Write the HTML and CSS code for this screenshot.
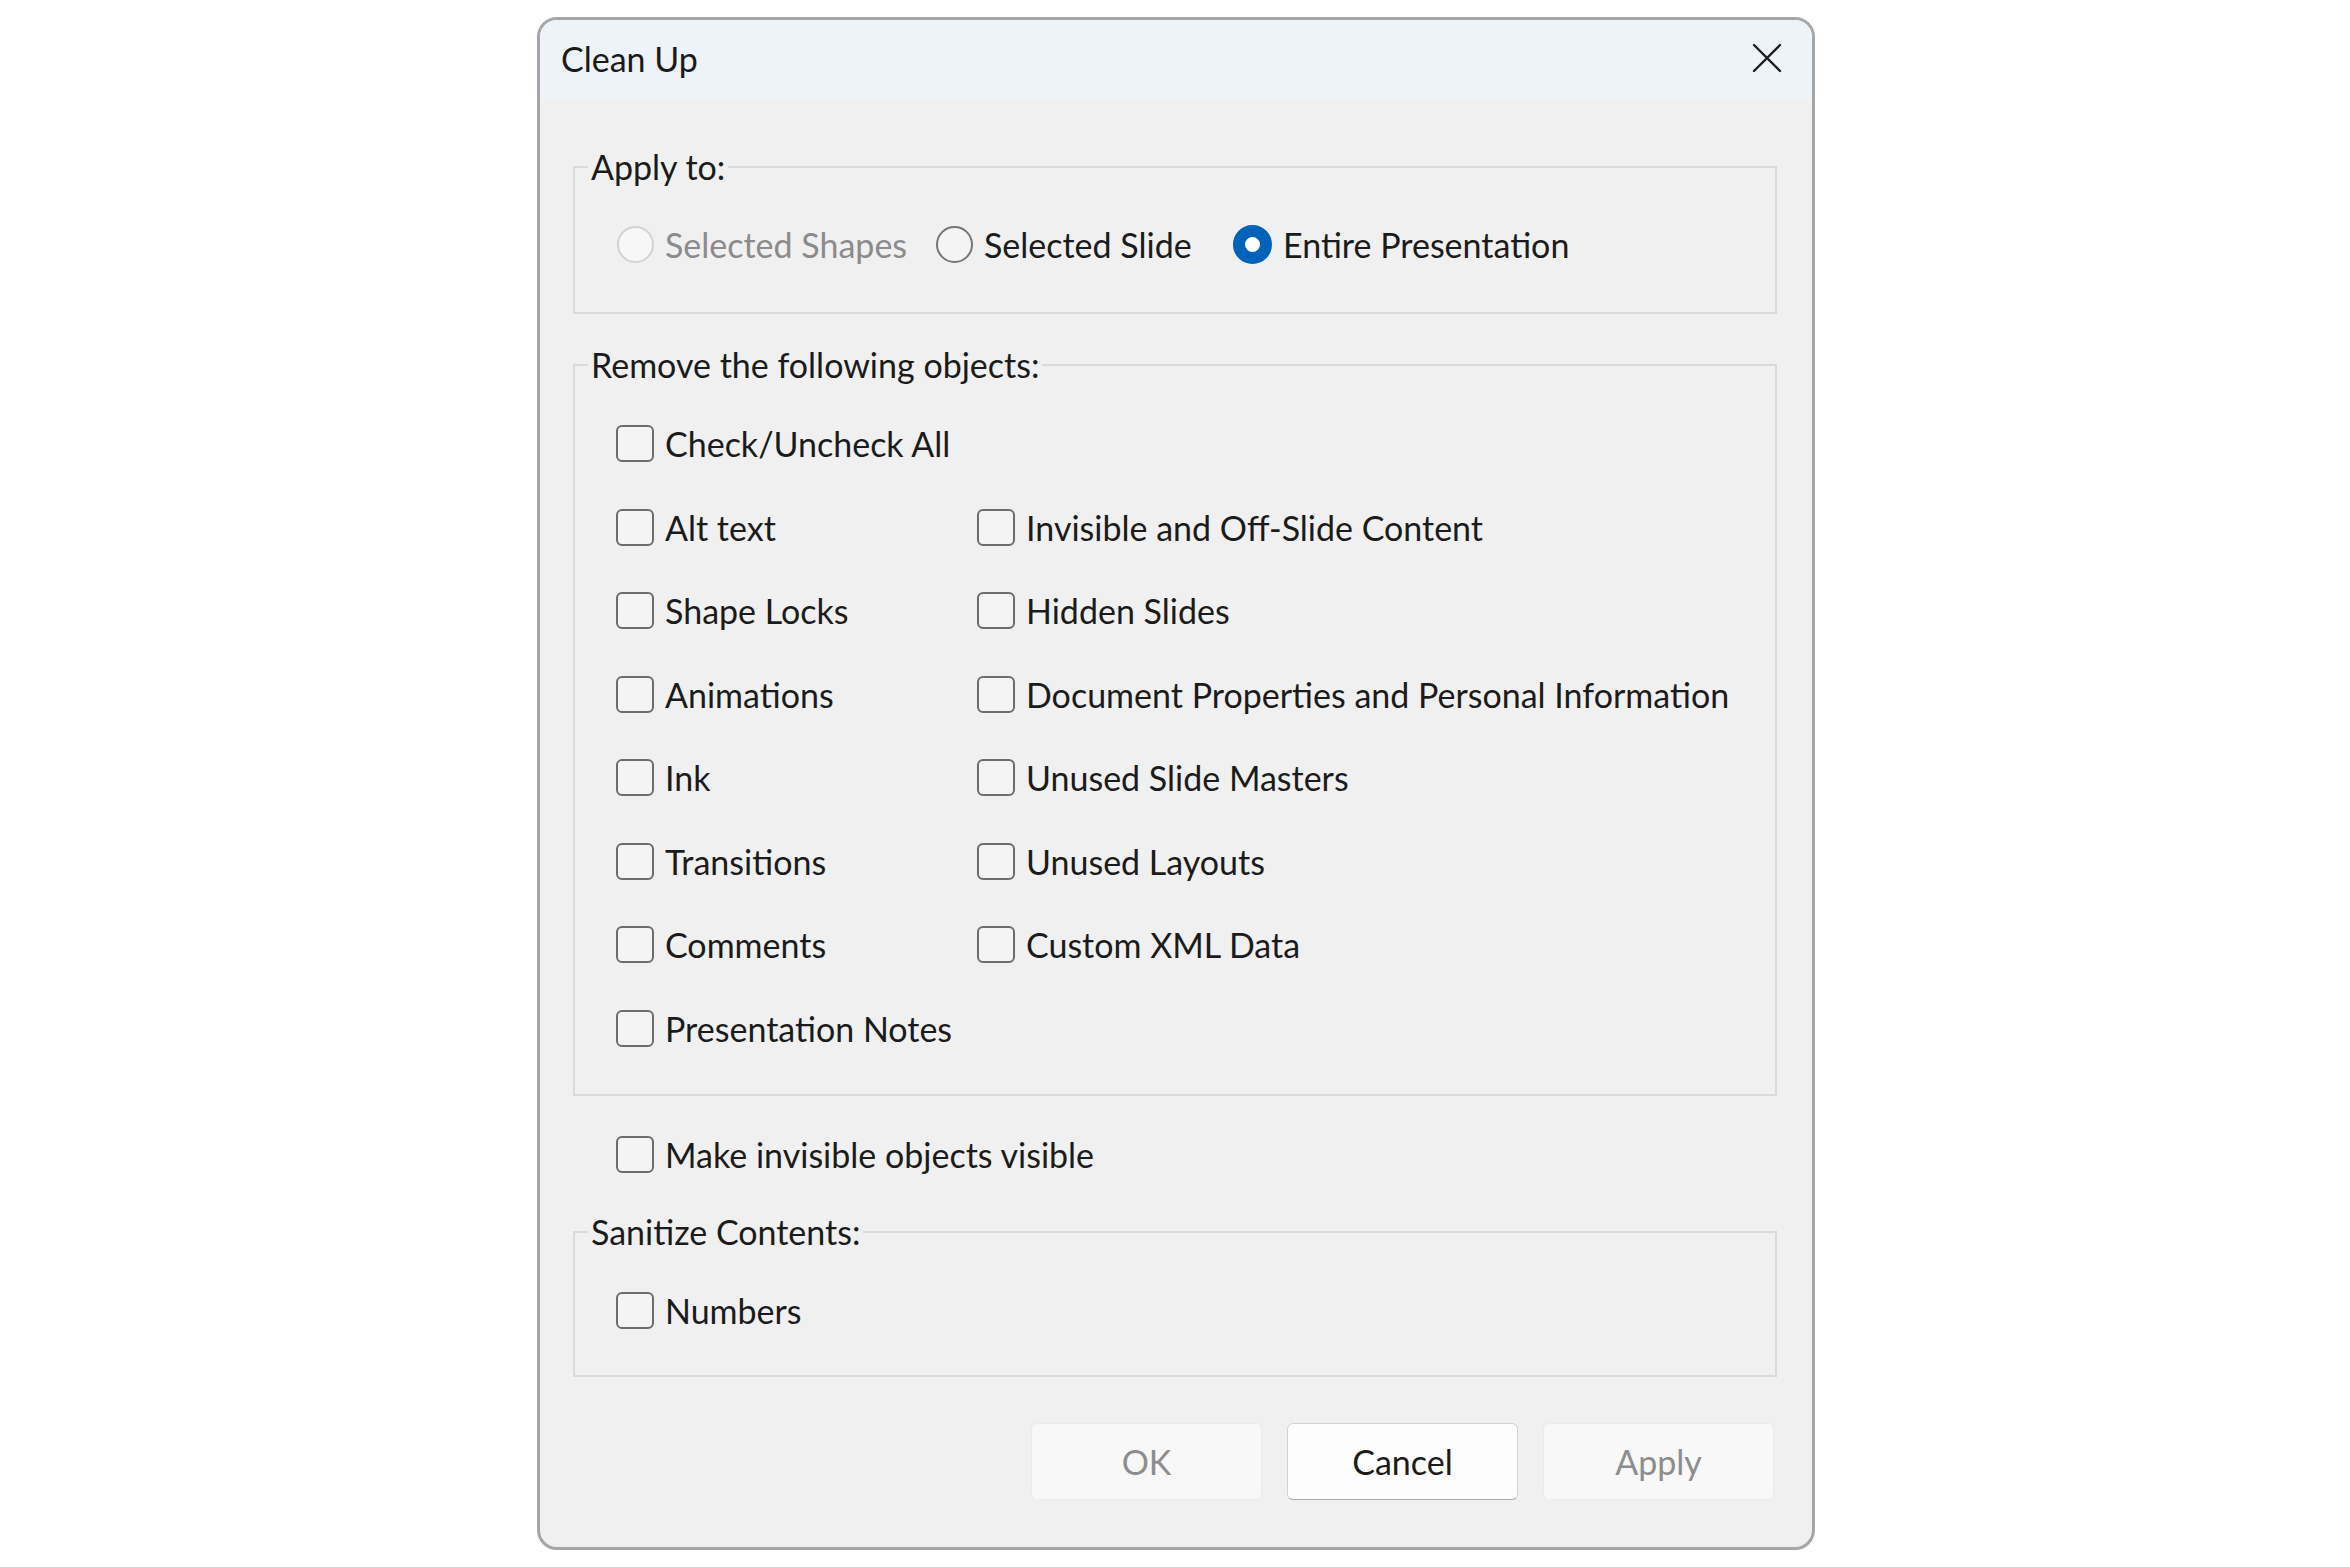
FILE: index.html
```html
<!DOCTYPE html>
<html lang="en">
<head>
<meta charset="utf-8">
<title>Clean Up</title>
<link rel="stylesheet" href="styles.css">
</head>
<body>
<div class="dialog">
  <div class="titlebar">
    <span class="title">Clean Up</span>
    <svg class="close" viewBox="0 0 30 30" aria-hidden="true"><path d="M2 2 L28 28 M28 2 L2 28" stroke="#1c1c1c" stroke-width="2.4" fill="none" stroke-linecap="round"/></svg>
  </div>
  <div class="body">
    <fieldset class="group group-apply">
      <legend>Apply to:</legend>
      <div class="radios">
        <label class="opt radio-1 disabled"><span class="radio radio-disabled"></span><span>Selected Shapes</span></label>
        <label class="opt radio-2"><span class="radio"></span><span>Selected Slide</span></label>
        <label class="opt radio-3"><span class="radio radio-on"></span><span>Entire Presentation</span></label>
      </div>
    </fieldset>

    <fieldset class="group group-remove">
      <legend>Remove the following objects:</legend>
      <div class="grid">
        <label class="opt row full"><span class="box"></span><span>Check/Uncheck All</span></label>
        <label class="opt row"><span class="box"></span><span>Alt text</span></label>
        <label class="opt row"><span class="box"></span><span>Invisible and Off-Slide Content</span></label>
        <label class="opt row"><span class="box"></span><span>Shape Locks</span></label>
        <label class="opt row"><span class="box"></span><span>Hidden Slides</span></label>
        <label class="opt row"><span class="box"></span><span>Animations</span></label>
        <label class="opt row"><span class="box"></span><span>Document Properties and Personal Information</span></label>
        <label class="opt row"><span class="box"></span><span>Ink</span></label>
        <label class="opt row"><span class="box"></span><span>Unused Slide Masters</span></label>
        <label class="opt row"><span class="box"></span><span>Transitions</span></label>
        <label class="opt row"><span class="box"></span><span>Unused Layouts</span></label>
        <label class="opt row"><span class="box"></span><span>Comments</span></label>
        <label class="opt row"><span class="box"></span><span>Custom XML Data</span></label>
        <label class="opt row full"><span class="box"></span><span>Presentation Notes</span></label>
      </div>
    </fieldset>

    <label class="opt row standalone"><span class="box"></span><span>Make invisible objects visible</span></label>

    <fieldset class="group group-sanitize">
      <legend>Sanitize Contents:</legend>
      <div class="inner">
        <label class="opt row"><span class="box"></span><span>Numbers</span></label>
      </div>
    </fieldset>

    <div class="buttons">
      <button class="btn btn-disabled">OK</button>
      <button class="btn">Cancel</button>
      <button class="btn btn-disabled">Apply</button>
    </div>
  </div>
</div>
</body>
</html>
```

FILE: styles.css
```css
html, body {
  margin: 0;
  padding: 0;
  background: #ffffff;
}

body {
  font-family: Lato, "Open Sans", "Noto Sans", sans-serif;
  font-size: 34px;
  color: #1b1b1b;
}

.dialog {
  box-sizing: border-box;
  margin: 17px 0 0 537px;
  width: 1278px;
  height: 1533px;
  border: 3px solid #a6a6a6;
  border-radius: 20px;
  overflow: hidden;
  display: flex;
  flex-direction: column;
  background: #f0f0f0;
}

.titlebar {
  box-sizing: border-box;
  height: 80px;
  flex: 0 0 80px;
  background: #eef2f9;
  display: flex;
  align-items: center;
  justify-content: space-between;
  padding: 0 30px 4px 21px;
}

.title {
  font-size: 34px;
  color: #1a1a1a;
}

.close {
  width: 30px;
  height: 30px;
  display: block;
}

.body {
  flex: 1;
  padding: 0 35px 0 33px;
  display: flex;
  flex-direction: column;
}

.group {
  margin: 0;
  border: 2px solid #dadada;
  min-width: 0;
  padding-left: 13px;
  padding-right: 0;
}

.group legend {
  margin-left: 0;
  padding: 0 3px;
  line-height: 40px;
}

.group-apply {
  margin-top: 47px;
  padding-top: 37px;
  padding-bottom: 48px;
}

.group-remove {
  margin-top: 31px;
  padding-top: 17px;
  padding-bottom: 24px;
}

.group-sanitize {
  margin-top: 15px;
  padding-top: 17px;
  padding-bottom: 23px;
}

.opt {
  display: flex;
  align-items: center;
  gap: 11px;
  white-space: nowrap;
}

.row {
  height: 83.5px;
}

.radios {
  display: flex;
  height: 40px;
  align-items: center;
  margin-left: 29px;
}

.radio-1 { width: 319px; }
.radio-2 { width: 297px; }

.disabled {
  color: #8b8b8b;
}

.radio {
  box-sizing: border-box;
  width: 37px;
  height: 37px;
  flex: 0 0 37px;
  border-radius: 50%;
  border: 2px solid #767676;
  background: #f4f4f4;
}

.radio-disabled {
  border-color: #d2d2d2;
  background: #f7f7f7;
}

.radio-on {
  width: 39px;
  height: 39px;
  flex: 0 0 39px;
  border: 12.5px solid #0063b8;
  background: #ffffff;
}

.grid {
  display: grid;
  grid-template-columns: 361px 1fr;
  margin-left: 28px;
}

.inner {
  margin-left: 28px;
}

.grid .full {
  grid-column: 1 / -1;
}

.box {
  box-sizing: border-box;
  width: 38px;
  height: 37px;
  flex: 0 0 38px;
  border: 2px solid #6c6c6c;
  border-radius: 6px;
  background: #f4f4f4;
}

.standalone {
  margin: 17px 0 0 43px;
}

.buttons {
  margin-top: 46px;
  display: flex;
  justify-content: flex-end;
  gap: 25px;
  padding-right: 3px;
}

.btn {
  box-sizing: border-box;
  width: 231px;
  height: 77px;
  font-family: inherit;
  font-size: 34px;
  color: #1b1b1b;
  background: #fdfdfd;
  border: 1.5px solid #d2d2d2;
  border-bottom-color: #a9a9a9;
  border-radius: 6px;
  padding: 0;
}

.btn-disabled {
  color: #8d8d8d;
  background: #f8f8f8;
  border-color: #ebebeb;
}
```
